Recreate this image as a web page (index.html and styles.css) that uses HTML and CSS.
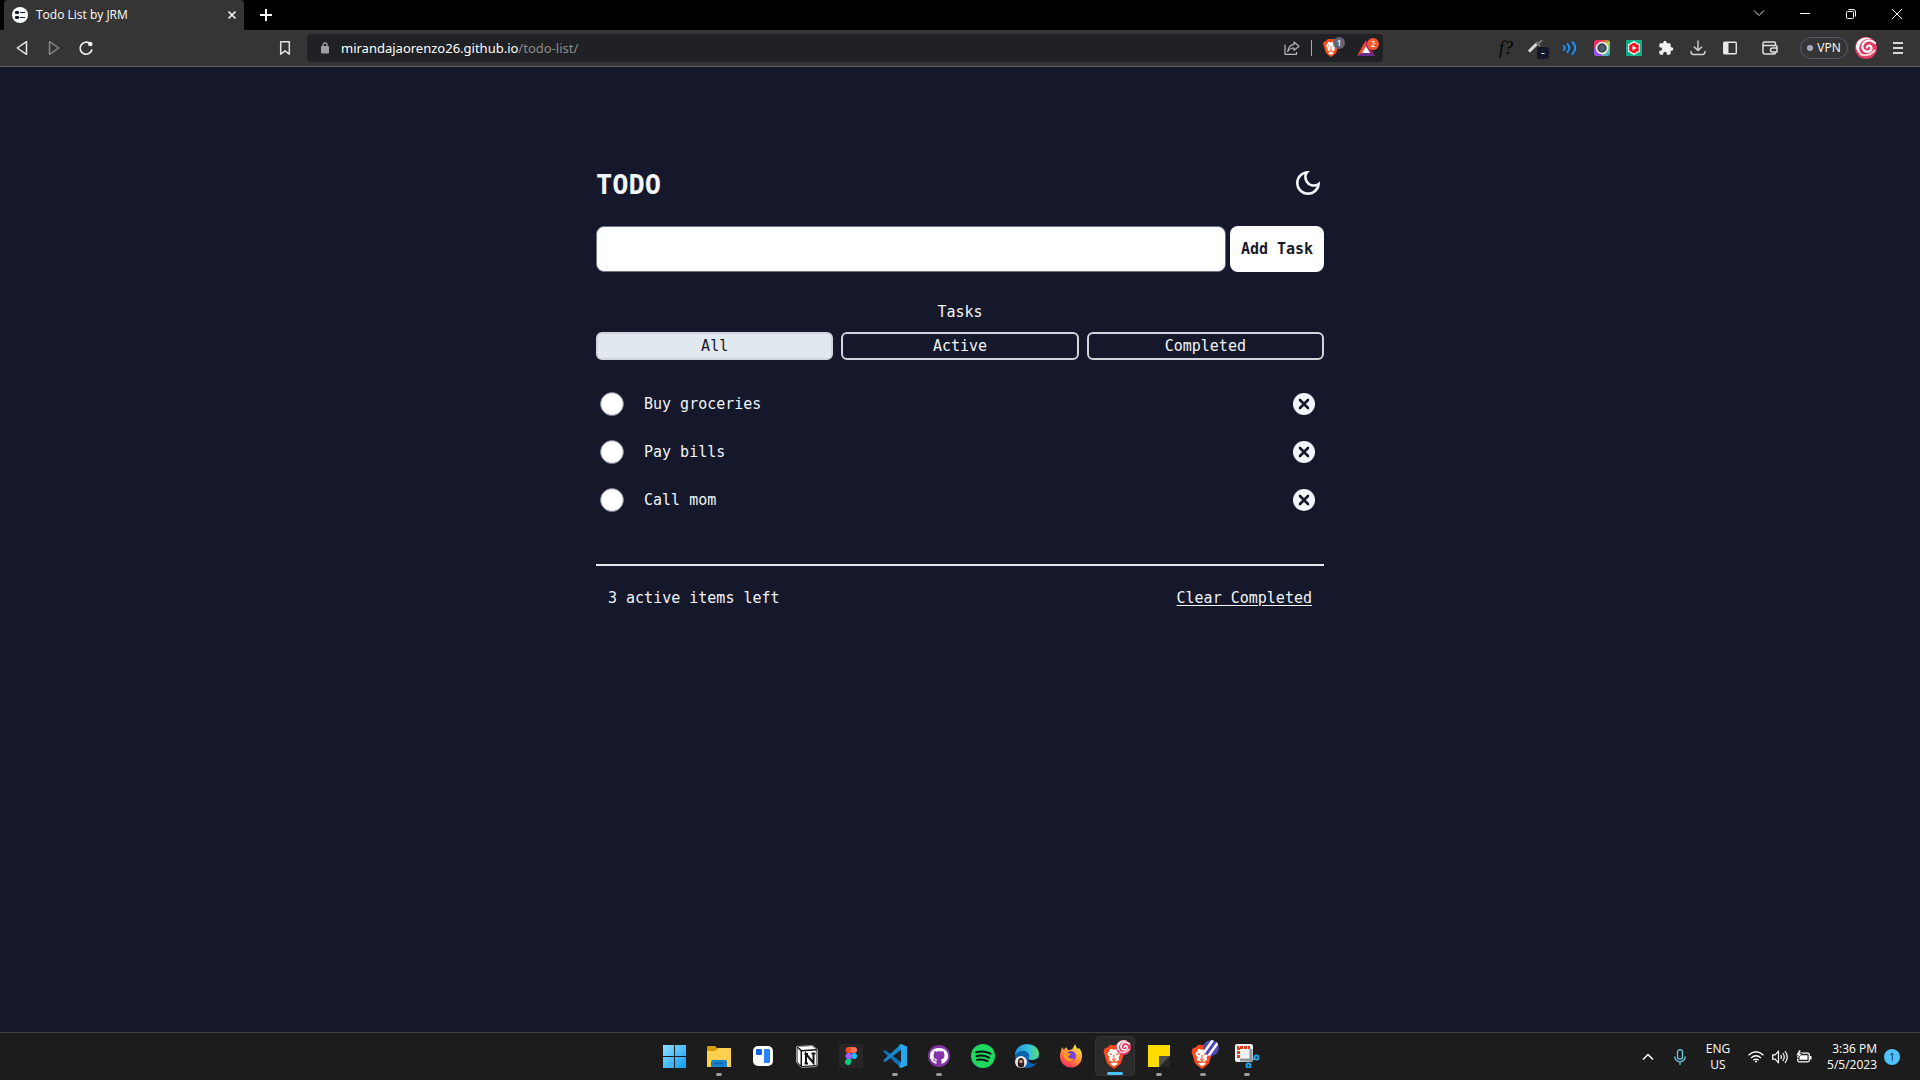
FILE: index.html
```html
<!DOCTYPE html>
<html lang="en">
<head>
<meta charset="utf-8">
<title>Todo List by JRM</title>
<link rel="stylesheet" href="styles.css">
</head>
<body>
<header class="browser">
  <div class="tabs">
    <div class="tab">
      <svg width="16" height="16" viewBox="0 0 16 16"><circle cx="8" cy="8" r="8" fill="#fff"/><g fill="#15182a"><rect x="3" y="4" width="4" height="3" rx="1"/><rect x="3" y="9" width="4" height="3" rx="1"/><rect x="8" y="5" width="5" height="1"/><rect x="8" y="10" width="5" height="1"/></g></svg>
      <span class="tab-title">Todo List by JRM</span>
      <button class="tab-close" aria-label="Close tab"><svg width="8" height="8" viewBox="0 0 8 8" stroke="#e8e8e8" stroke-width="1.6"><path d="M.5.5l7 7M7.5.5l-7 7"/></svg></button>
    </div>
    <button class="new-tab" aria-label="New tab"><svg width="12" height="12" viewBox="0 0 12 12" stroke="#fff" stroke-width="2"><path d="M6 0v12M0 6h12"/></svg></button>
    <div class="window-buttons">
      <button aria-label="Search tabs"><svg width="12" height="12" viewBox="0 0 12 12" fill="none" stroke="#ddd"><path d="M1 2.500l5 5 5-5"/></svg></button>
      <button aria-label="Minimize"><svg width="10" height="10" viewBox="0 0 10 10" stroke="#fff"><path d="M0 4.500h10"/></svg></button>
      <button aria-label="Restore"><svg width="10" height="10" viewBox="0 0 10 10" fill="none" stroke="#fff"><rect x=".5" y="2.500" width="7" height="7" rx="1"/><path d="M2.500.5H7Q9.500.5 9.500 3v4.500"/></svg></button>
      <button aria-label="Close"><svg width="10" height="10" viewBox="0 0 10 10" stroke="#fff"><path d="M0 0l10 10M10 0L0 10"/></svg></button>
    </div>
  </div>
  <div class="toolbar">
    <div class="nav">
      <button aria-label="Back"><svg width="16" height="16" viewBox="0 0 16 16" fill="none" stroke="#e8e8e8" stroke-width="1.500" stroke-linejoin="round"><path d="M12.500 1.700v12.600L3.200 8z"/></svg></button>
      <button aria-label="Forward"><svg width="16" height="16" viewBox="0 0 16 16" fill="none" stroke="#858585" stroke-width="1.500" stroke-linejoin="round"><path d="M3.500 1.700v12.600L12.800 8z"/></svg></button>
      <button aria-label="Reload"><svg width="16" height="16" viewBox="0 0 16 16" fill="none" stroke="#f2f2f2" stroke-width="1.700"><path d="M14 9.500A6 6 0 1 1 12.300 3.900"/><circle cx="12.300" cy="4" r="2.300" fill="#f2f2f2" stroke="none"/></svg></button>
      <button class="bookmark" aria-label="Bookmark this page"><svg width="16" height="16" viewBox="0 0 16 16" fill="none" stroke="#e0e0e0" stroke-width="1.500" stroke-linejoin="round"><path d="M3.700 1.800h8.600v12.400L8 10.800l-4.300 3.400z"/></svg></button>
    </div>
    <div class="address">
      <svg class="lock" width="10" height="12" viewBox="0 0 10 12"><rect x="1" y="4" width="8" height="7.500" rx="1" fill="#9aa0a6"/><path d="M3 5V3a2 2 0 0 1 4 0v2" fill="none" stroke="#9aa0a6" stroke-width="1.300"/></svg>
      <span class="url">mirandajaorenzo26.github.io<span class="url-path">/todo-list/</span></span>
      <svg class="share" width="16" height="16" viewBox="0 0 16 16" fill="none" stroke="#b5b5b5" stroke-width="1.200" stroke-linejoin="round"><path d="M1 4.500v9.900h11.500v-2.500M10 2l5 4.200-5 4.200V8Q6 7.700 3.700 11.500 4.300 5.200 10 4.300z"/></svg>
      <span class="divider"></span>
      <span class="badged">
        <svg width="16" height="18" viewBox="0 0 16 18"><use href="#brave"/></svg>
        <b class="badge">1</b>
      </span>
      <span class="badged">
        <svg width="18" height="16" viewBox="0 0 18 16"><path d="M9 0L0 16l9-5z" fill="#ff4724"/><path d="M9 0l9 16-9-5z" fill="#9e1f63"/><path d="M0 16h18l-9-5z" fill="#662d91"/><path d="M9 6l4 7H5z" fill="#fff"/></svg>
        <b class="badge badge-red">2</b>
      </span>
    </div>
    <div class="extensions">
      <button class="font-finder">f?</button>
      <button aria-label="Color picker" class="picker"><svg width="22" height="22" viewBox="0 0 22 22"><path d="M2 14.500L9.500 7" stroke="#ddd" stroke-width="3"/><path d="M9 5l4 4M11 7l4-4" stroke="#777" stroke-width="2"/><rect x="10" y="10" width="12" height="12" rx="2" fill="#15182a"/><path d="M14.500 16.500h3" stroke="#fff"/></svg></button>
      <button aria-label="Read aloud"><svg width="16" height="16" viewBox="0 0 16 16" fill="none" stroke="#1890f5" stroke-width="2" stroke-linecap="round"><path d="M2 6q1.500 2 0 4M5.500 4q3.500 4 0 8M10.500 2q5.500 6 0 12"/></svg></button>
      <button aria-label="Screen capture"><svg width="16" height="16" viewBox="0 0 16 16"><defs><linearGradient id="rainbow" x1="0" x2="1" y1="0" y2="1"><stop stop-color="#f02090"/><stop offset=".3" stop-color="#ee3a38"/><stop offset=".55" stop-color="#a6d84c"/><stop offset="1" stop-color="#25a7f0"/></linearGradient></defs><rect width="16" height="16" rx="3" fill="url(#rainbow)"/><path d="M0 7v6q0 3 3 3h6z" fill="#9a4fff"/><circle cx="8" cy="8" r="5.500" fill="#36424c" stroke="#fff" stroke-width="1.500"/><circle cx="8" cy="8" r="3" fill="#4e5d68"/></svg></button>
      <button aria-label="Video helper"><svg width="16" height="16" viewBox="0 0 16 16"><rect width="16" height="16" rx="1" fill="#10b088"/><path d="M8 1l6 3.500v7L8 15l-6-3.500v-7z" fill="#fff"/><path d="M8 2.500l4.800 2.700v5.600L8 13.500l-4.800-2.700V5.200z" fill="#f01020"/><path d="M6.500 5.500v5l4-2.500z" fill="#fff"/></svg></button>
      <button aria-label="Extensions"><svg width="16" height="16" viewBox="0 0 24 24" fill="#f2f2f2"><path d="M20.500 11H19V7c0-1.100-.9-2-2-2h-4V3.500a2.500 2.500 0 0 0-5 0V5H4c-1.100 0-2 .9-2 2v3.800h1.500a2.700 2.700 0 0 1 0 5.400H2V20c0 1.100.9 2 2 2h3.800v-1.500a2.700 2.700 0 0 1 5.400 0V22H17c1.100 0 2-.9 2-2v-4h1.500a2.500 2.500 0 0 0 0-5z"/></svg></button>
      <button aria-label="Downloads"><svg width="16" height="16" viewBox="0 0 16 16" fill="none" stroke="#d5d5d5" stroke-width="1.400" stroke-linecap="round" stroke-linejoin="round"><path d="M8 1v9.500M4.300 7L8 10.600 11.700 7M1 11.500q0 3 2.500 3h9q2.500 0 2.500-3"/></svg></button>
      <button aria-label="Sidebar"><svg width="14" height="14" viewBox="0 0 14 14"><rect x=".7" y="1.200" width="12.600" height="11.600" rx="1" fill="none" stroke="#e8e8e8" stroke-width="1.400"/><path d="M1 1.500h4.500v11H1z" fill="#e8e8e8"/></svg></button>
      <button class="wallet" aria-label="Wallet"><svg width="16" height="16" viewBox="0 0 16 16" fill="none" stroke="#e0e0e0" stroke-width="1.500" stroke-linejoin="round"><path d="M13.500 5.500V3.500q0-1.500-1.500-1.500H2.500Q1 2 1 3.700V12q0 2 2 2h9q1.500 0 1.500-1.500V12M1 5.500h12.500q1.500 0 1.500 1.500v5H10.500a2 2 0 0 1 0-4H15"/></svg></button>
      <button class="vpn"><i class="vpn-dot"></i>VPN</button>
      <button class="profile" aria-label="Profile"><svg width="22" height="22" viewBox="0 0 22 22"><use href="#swirl"/></svg></button>
      <button aria-label="Menu"><svg width="10" height="12" viewBox="0 0 10 12" stroke="#d8d8d8" stroke-width="2"><path d="M0 1h10M0 6h10M0 11h10"/></svg></button>
    </div>
  </div>
</header>

<main class="page">
  <div class="todo">
    <div class="todo-head">
      <h1>TODO</h1>
      <button class="theme" aria-label="Toggle theme"><svg width="32" height="32" viewBox="0 0 24 24" fill="#f1f5f9"><path d="M9.370 5.510A7.350 7.350 0 0 0 9.100 7.500c0 4.080 3.320 7.400 7.400 7.400.68 0 1.350-.09 1.990-.27C17.450 17.190 14.930 19 12 19c-3.860 0-7-3.140-7-7 0-2.930 1.810-5.450 4.370-6.490zM12 3a9 9 0 1 0 9 9c0-.46-.04-.92-.1-1.360a5.389 5.389 0 0 1-4.400 2.260 5.403 5.403 0 0 1-3.140-9.800c-.44-.06-.9-.1-1.360-.1z"/></svg></button>
    </div>
    <form class="add">
      <input type="text" aria-label="New task">
      <button type="button">Add Task</button>
    </form>
    <h2>Tasks</h2>
    <div class="filters">
      <button class="selected">All</button>
      <button>Active</button>
      <button>Completed</button>
    </div>
    <ul class="list">
      <li><input type="checkbox" id="task-1"><label for="task-1">Buy groceries</label><button aria-label="Delete Buy groceries"><svg width="22" height="22" viewBox="0 0 22 22"><use href="#remove"/></svg></button></li>
      <li><input type="checkbox" id="task-2"><label for="task-2">Pay bills</label><button aria-label="Delete Pay bills"><svg width="22" height="22" viewBox="0 0 22 22"><use href="#remove"/></svg></button></li>
      <li><input type="checkbox" id="task-3"><label for="task-3">Call mom</label><button aria-label="Delete Call mom"><svg width="22" height="22" viewBox="0 0 22 22"><use href="#remove"/></svg></button></li>
    </ul>
    <div class="summary">
      <span>3 active items left</span>
      <button>Clear Completed</button>
    </div>
  </div>
</main>

<footer class="taskbar">
  <div class="apps">
    <button aria-label="Start"><svg width="24" height="24" viewBox="0 0 24 24"><defs><linearGradient id="win" x1="0" x2="1" y1="0" y2="1"><stop stop-color="#8be0ff"/><stop offset="1" stop-color="#0f9cf5"/></linearGradient></defs><path d="M0 1h11v11H0zM12 1h11v11H12zM0 13h11v11H0zM12 13h11v11H12z" fill="url(#win)"/></svg></button>
    <button class="running" aria-label="File Explorer"><svg width="24" height="24" viewBox="0 0 24 24"><path d="M0 3q0-1 1-1h7l3 3v5H0z" fill="#d99a08"/><path d="M0 7h8l3-3h12q1 0 1 1v18H0z" fill="#ffd04e"/><path d="M4 23v-5q0-2 2-2h12q2 0 2 2v5z" fill="#1882cf"/><path d="M7 19.500h9" stroke="#0a5da3" stroke-width="1.500"/></svg></button>
    <button aria-label="Trello"><svg width="24" height="24" viewBox="0 0 24 24"><rect x="2" y="2" width="20" height="20" rx="5" fill="#fff"/><rect x="5" y="5" width="6" height="6" rx="1" fill="#0b63dd"/><rect x="13" y="5" width="6" height="14" rx="1" fill="#2684ff"/></svg></button>
    <button aria-label="Notion"><svg width="24" height="24" viewBox="0 0 24 24"><path d="M1.500 2.500L17.500 1.500l5 4v15.500l-1 1.500-15 1-5-5z" fill="#111" stroke="#999" stroke-width="1"/><path d="M3 3l14-1 4 3-14 1zM2.500 4l3 3v14l-3-3z" fill="#fff"/><path d="M7 7.500L21.500 6.500v14.500L7 22z" fill="#fff"/><path d="M11 19.500V10l7.500 9V9.500M9.500 10H13M16.500 9.500h4M9.500 19.500h3.500" fill="none" stroke="#111" stroke-width="2"/></svg></button>
    <button aria-label="Figma"><svg width="24" height="24" viewBox="0 0 24 24"><rect width="24" height="24" rx="1" fill="#262626"/><path d="M12 3H9.500a3 3 0 0 0 0 6H12z" fill="#f24e1e"/><path d="M12 3h3a3 3 0 0 1 0 6h-3z" fill="#ff7262"/><path d="M12 9H9.500a3 3 0 0 0 0 6H12z" fill="#a259ff"/><circle cx="15" cy="12" r="3" fill="#1abcfe"/><path d="M12 15H9.500a3 3 0 1 0 2.500 3z" fill="#0acf83"/></svg></button>
    <button class="running" aria-label="Visual Studio Code"><svg width="24" height="24" viewBox="0 0 24 24"><path d="M0 7.500L2 6l16 12v6z" fill="#0d73b8"/><path d="M0 16.500L2 18 18 6V0z" fill="#1687cf"/><path d="M18 0l6 2.500v19L18 24l-2-1 2-5.500v-11L16 1z" fill="#28a6ee"/></svg></button>
    <button class="running" aria-label="GitHub Desktop"><svg width="24" height="24" viewBox="0 0 24 24"><circle cx="12" cy="12" r="11" fill="#8534a8"/><path d="M12 4a8 8 0 0 0-2.500 15.800v-2.300q-2.300.3-3-1.500l-1-1.200q1.500-.3 2.300 1.300.8 1 1.900.5l.5-1.200c-2.700-.4-3.700-1.800-3.700-4 0-1 .3-1.600.8-2.200-.2-.8-.1-1.500.2-2.200q1 0 2.300.9 2.200-.6 4.400 0 1.300-.9 2.300-.9c.3.7.4 1.400.2 2.200.5.6.8 1.300.8 2.200 0 2.200-1 3.600-3.700 4 .5.500.7 1 .7 1.800v2.600A8 8 0 0 0 12 4z" fill="#fff" fill-rule="evenodd"/><path d="M8.500 8q3.500-1.500 7 0 1.500 1 1.300 3-.3 3.500-4.800 3.500T7.200 11q-.2-2 1.300-3z" fill="#8534a8"/></svg></button>
    <button aria-label="Spotify"><svg width="24" height="24" viewBox="0 0 24 24"><circle cx="12" cy="12" r="12" fill="#1ed760"/><path d="M5 8.200q7.500-2.200 14.500 1.500M5.500 12.200q6.500-1.800 12.500 1.400M6 15.900q5.500-1.400 10.500 1.300" fill="none" stroke="#111" stroke-width="2" stroke-linecap="round"/></svg></button>
    <button aria-label="Edge"><svg width="24" height="24" viewBox="0 0 24 24"><defs><linearGradient id="edge" x1="0" x2="1"><stop stop-color="#1d93df"/><stop offset=".6" stop-color="#35c4d8"/><stop offset="1" stop-color="#62d86a"/></linearGradient></defs><circle cx="12" cy="12" r="12" fill="#0b62ad"/><path d="M0 11C0-3 23-3 24 9c0 5-3 7-7 7-3 0-5-1-3-3 2-5-8-10-14-2z" fill="url(#edge)"/><path d="M13.500 13q-1.500 3 3 3 4 .5 6-2l2 3-5 3q-8-1-6-7z" fill="#1c1c1c"/><circle cx="6" cy="18" r="6" fill="#e8e8e8"/><path d="M3 22q-1-8 3-8t3 8q-3 3-6 0z" fill="#2b2222"/><circle cx="6" cy="17.500" r="1.700" fill="#d49c82"/></svg></button>
    <button aria-label="Firefox"><svg width="24" height="24" viewBox="0 0 24 24"><defs><linearGradient id="fox" x1=".8" x2=".2" y1="0" y2="1"><stop stop-color="#fff04a"/><stop offset=".5" stop-color="#ff9230"/><stop offset="1" stop-color="#ff1e65"/></linearGradient></defs><path d="M2 7l1-4 2 3 2-3 2 3q4 0 5-2l2-4q1 4 3 5l1-1q3 3 3 8a11 11 0 0 1-22 1Q1 9 2 7z" fill="url(#fox)"/><circle cx="12" cy="12" r="5" fill="#7540df"/><path d="M5 9q4-1 7 1-1 2-3 2 1 4 6 2-2 4-6 3-5-2-4-8z" fill="#ff9a24"/></svg></button>
    <button class="running active" aria-label="Brave"><svg width="32" height="32" viewBox="0 0 32 32"><svg x="4" y="5" width="22" height="24" viewBox="0 0 16 18"><use href="#brave"/></svg><svg x="17" y="0" width="15" height="15" viewBox="0 0 22 22"><use href="#swirl"/></svg></svg></button>
    <button class="running" aria-label="Sticky Notes"><svg width="24" height="24" viewBox="0 0 24 24"><path d="M1 1h22v11L12 23H1z" fill="#ffdc00"/><path d="M12 12h11v11H12z" fill="#262626"/><path d="M12 12h11L12 23z" fill="#4f4f4f"/></svg></button>
    <button class="running" aria-label="Brave, second profile"><svg width="32" height="32" viewBox="0 0 32 32"><defs><clipPath id="ball"><circle cx="24" cy="8" r="8"/></clipPath></defs><svg x="4" y="5" width="22" height="24" viewBox="0 0 16 18"><use href="#brave"/></svg><g clip-path="url(#ball)"><circle cx="24" cy="8" r="8" fill="#5148b5"/><path d="M16 14L26 0M20 18L32 1" stroke="#fff" stroke-width="2.500"/></g></svg></button>
    <button class="running" aria-label="Snipping Tool"><svg width="24" height="24" viewBox="0 0 24 24"><rect width="18" height="18" rx="2" fill="#eef1f4"/><path d="M3.500 14V3.500H15" fill="none" stroke="#d8401a" stroke-width="3" stroke-dasharray="3 1"/><path d="M16 5v11H5" fill="none" stroke="#8f989f" stroke-width="3"/><path d="M14 18l6-4" stroke="#8f989f" stroke-width="2"/><g fill="none" stroke="#1ca5ee" stroke-width="2"><circle cx="21.500" cy="13.500" r="2"/><circle cx="13.500" cy="21.500" r="2"/></g></svg></button>
  </div>
  <div class="tray">
    <button aria-label="Show hidden icons"><svg width="12" height="8" viewBox="0 0 12 8" fill="none" stroke="#fff" stroke-width="1.500"><path d="M1 6.500L6 1.500l5 5"/></svg></button>
    <button aria-label="Microphone"><svg width="12" height="16" viewBox="0 0 12 16" fill="none" stroke="#72c8dc" stroke-width="1.300"><rect x="3.500" y=".7" width="5" height="9.500" rx="2.500"/><path d="M.7 7.500a5.300 5.300 0 0 0 10.600 0M6 12.800V16"/></svg></button>
    <div class="language">ENG<br>US</div>
    <div class="status">
      <svg width="16" height="12" viewBox="0 0 16 12" fill="none" stroke="#fff" stroke-width="1.300"><path d="M.5 4.300q7.500-7 15 0M3 7q5-4.500 10 0M5.300 9.300q2.700-2.400 5.400 0"/><circle cx="8" cy="10.500" r="1" fill="#fff" stroke="none"/></svg>
      <svg width="16" height="14" viewBox="0 0 16 14" fill="none" stroke="#fff" stroke-width="1.200" stroke-linejoin="round"><path d="M.7 4.800h2.500L6.500 1.200v11.600L3.200 9.200H.7zM8.700 5q1.500 2 0 4M10.800 3q3 4 0 8M13 1q4.500 6 0 12"/></svg>
      <svg width="16" height="14" viewBox="0 0 16 14"><rect x="1.700" y="3.200" width="11.600" height="8.600" rx="1.500" fill="none" stroke="#fff" stroke-width="1.300"/><path d="M3.500 5.200h8v4.600h-8zM14 6h1.500v3.500H14z" fill="#fff"/><path d="M3 0L0 5.500h2.300L1.500 9 6 3.500H3.800L5 0z" fill="#fff" stroke="#1c1c1c" stroke-width=".6"/></svg>
    </div>
    <div class="clock">3:36 PM<br>5/5/2023</div>
    <b class="notice">1</b>
  </div>
</footer>

<svg class="symbols" aria-hidden="true">
  <symbol id="brave" viewBox="0 0 16 18"><path d="M5 0h6l2 2 1.500 0L16 4.500l-.5 1.500-2 7q-.5 1.500-5.500 5-5-3.500-5.500-5l-2-7L0 4.500 1.500 2H3z" fill="#fb4b18"/><path d="M8 3.500l2.500-.7L13 6.500l-1.500 2.700.5 1.800-2.700 1.800L11 14l-3 2-3-2 1.700-1.200L4 11l.5-1.800L3 6.500l2.500-3.700z" fill="#fff"/><path d="M4.500 6.500l2 .7M11.500 6.500l-2 .7M8 7.500v3.300M6.500 10.800l1.500.8 1.500-.8M6 13.300l2-1 2 1" fill="none" stroke="#fb4b18" stroke-width=".8"/></symbol>
  <symbol id="swirl" viewBox="0 0 22 22"><circle cx="11" cy="11" r="11" fill="#e23a62"/><path d="M2 5.500A11 11 0 0 1 17 2Q8 1 5 7.500 2.500 14 8 17.500 1 16 1 9z" fill="#fff"/><path d="M20 6Q14 1 9 5.500 5.500 10 9 13.500q4 3 7-.5 1.500-3-1.500-4.500-2.500 0-2.500 2" fill="none" stroke="#fff" stroke-width="2.200" stroke-linecap="round"/><path d="M5 17q8 4 15-4" fill="none" stroke="#ffd3d9" stroke-width="2"/></symbol>
  <symbol id="remove" viewBox="0 0 22 22"><circle cx="11" cy="11" r="11" fill="#f1f5f9"/><path d="M7 7l8 8M15 7l-8 8" stroke="#15182a" stroke-width="2.600" stroke-linecap="round"/></symbol>
</svg>
</body>
</html>
```
FILE: styles.css
```css
* {
  box-sizing: border-box;
}

body {
  margin: 0;
  min-height: 100vh;
  display: flex;
  flex-direction: column;
  background: #15182a;
  color: #fff;
  font: 12px/16px "Open Sans", "Noto Sans", sans-serif;
}

button {
  display: flex;
  align-items: center;
  justify-content: center;
  margin: 0;
  padding: 0;
  border: 0;
  background: none;
  color: inherit;
  font: inherit;
}

svg {
  display: block;
  flex: none;
}

.symbols {
  display: none;
}

/* Browser window */

.tabs {
  display: flex;
  height: 30px;
  padding-left: 4px;
  background: #000;
}

.tab {
  display: flex;
  align-items: center;
  gap: 8px;
  width: 240px;
  padding: 0 8px;
  border-radius: 4px 4px 0 0;
  background: #353535;
}

.tab-title {
  flex: 1;
  font-weight: 500;
}

.tab-close {
  width: 8px;
}

.new-tab {
  width: 44px;
}

.window-buttons {
  display: flex;
  height: 28px;
  margin-left: auto;
}

.window-buttons button {
  width: 46px;
}

.toolbar {
  display: flex;
  align-items: center;
  height: 37px;
  border-bottom: 1px solid #656565;
  background: #353535;
}

.nav {
  display: flex;
  width: 307px;
  padding: 0 6px;
}

.nav button,
.extensions button {
  width: 32px;
}

.nav .bookmark {
  margin-left: auto;
}

.address {
  display: flex;
  flex: 1;
  align-items: center;
  height: 28px;
  padding: 0 7px 0 13px;
  border-radius: 4px;
  background: #202124;
}

.url {
  flex: 1;
  margin-left: 11px;
  font-family: "Noto Sans", sans-serif;
  font-size: 13px;
}

.url-path {
  color: #8b8b8b;
}

.divider {
  width: 1px;
  height: 16px;
  margin: 0 11px;
  background: #aaa;
}

.badged {
  position: relative;
  width: 34px;
}

.badged:last-child {
  width: 19px;
}

.badge {
  position: absolute;
  top: -2px;
  left: 10px;
  width: 12px;
  height: 12px;
  border-radius: 6px;
  background: #626573;
  font-size: 8px;
  font-weight: 600;
  line-height: 12px;
  text-align: center;
}

.badge-red {
  background: #fb542b;
}

.extensions {
  display: flex;
  align-items: center;
  justify-content: flex-end;
  width: 537px;
  padding-right: 6px;
}

.extensions .font-finder {
  color: #000;
  font: italic 18px/24px "Liberation Serif", serif;
}

.extensions .wallet {
  width: 48px;
}

.extensions .vpn {
  gap: 4px;
  width: 48px;
  height: 22px;
  margin: 0 7px 0 6px;
  border: 1px solid #5b5b72;
  border-radius: 11px;
}

.vpn-dot {
  width: 6px;
  height: 6px;
  border-radius: 3px;
  background: #a8a8bd;
}

.extensions .profile {
  width: 22px;
  margin-right: 5px;
}

/* Todo page */

.page {
  flex: 1;
  padding: 100px 0 40px;
  color: #f1f5f9;
  font: 15px/24px "DejaVu Sans Mono", monospace;
}

.todo {
  max-width: 768px;
  margin: 0 auto;
  padding: 0 20px;
}

.todo-head {
  display: flex;
  align-items: flex-start;
  justify-content: space-between;
}

h1 {
  margin: 0;
  font-size: 27px;
  line-height: 36px;
}

.add {
  display: flex;
  gap: 4px;
  margin-top: 23px;
}

.add input {
  flex: 1;
  height: 46px;
  padding: 0 12px;
  border: 1px solid #6b7280;
  border-radius: 8px;
  background: #fff;
  font: inherit;
}

.add button {
  width: 94px;
  border-radius: 8px;
  background: #fff;
  color: #15182a;
  font-weight: 700;
}

h2 {
  margin: 28px 0 8px;
  font-size: 15px;
  font-weight: 400;
  text-align: center;
}

.filters {
  display: grid;
  grid-template-columns: repeat(3, 1fr);
  gap: 8px;
}

.filters button {
  height: 28px;
  border: 2px solid #d1d5db;
  border-radius: 6px;
}

.filters .selected {
  background: #e2e8f0;
  color: #15182a;
}

.list {
  margin: 20px 0 40px;
  padding: 0;
  list-style: none;
}

.list li {
  display: flex;
  align-items: center;
  height: 48px;
  padding: 0 9px 0 4px;
}

.list input {
  appearance: none;
  width: 24px;
  height: 24px;
  margin: 0;
  border: 1px solid #6b7280;
  border-radius: 12px;
  background: #fff;
}

.list label {
  flex: 1;
  margin-left: 20px;
}

.summary {
  display: flex;
  justify-content: space-between;
  padding: 20px 12px 0;
  border-top: 2px solid #e5e7eb;
}

.summary button {
  text-decoration: underline;
  text-underline-offset: 2px;
}

/* Taskbar */

.taskbar {
  display: grid;
  grid-template-columns: 1fr auto 1fr;
  height: 48px;
  border-top: 1px solid #414141;
  background: #1c1c1c;
}

.apps {
  display: flex;
  grid-column: 2;
  gap: 4px;
  padding: 3px 0 3px 2px;
}

.apps button {
  position: relative;
  width: 40px;
  height: 40px;
  border-radius: 4px;
}

.apps .active {
  border: 1px solid #343434;
  background: #2a2a2a;
}

.apps .running::after {
  content: "";
  position: absolute;
  bottom: 0;
  left: 50%;
  width: 6px;
  height: 3px;
  margin-left: -3px;
  border-radius: 2px;
  background: #999;
}

.apps .active::after {
  width: 16px;
  margin-left: -8px;
  background: #4cc2ff;
}

.tray {
  display: flex;
  align-items: center;
  justify-content: flex-end;
  padding-right: 20px;
}

.tray button {
  width: 32px;
}

.language {
  width: 44px;
  text-align: center;
}

.status {
  display: flex;
  align-items: center;
  gap: 8px;
  margin: 0 14px 0 8px;
}

.clock {
  width: 51px;
  text-align: right;
  white-space: nowrap;
}

.notice {
  width: 16px;
  height: 16px;
  margin-left: 7px;
  border-radius: 8px;
  background: #4cc2ff;
  color: #1c1c1c;
  font-size: 10px;
  font-weight: 400;
  text-align: center;
}
```
